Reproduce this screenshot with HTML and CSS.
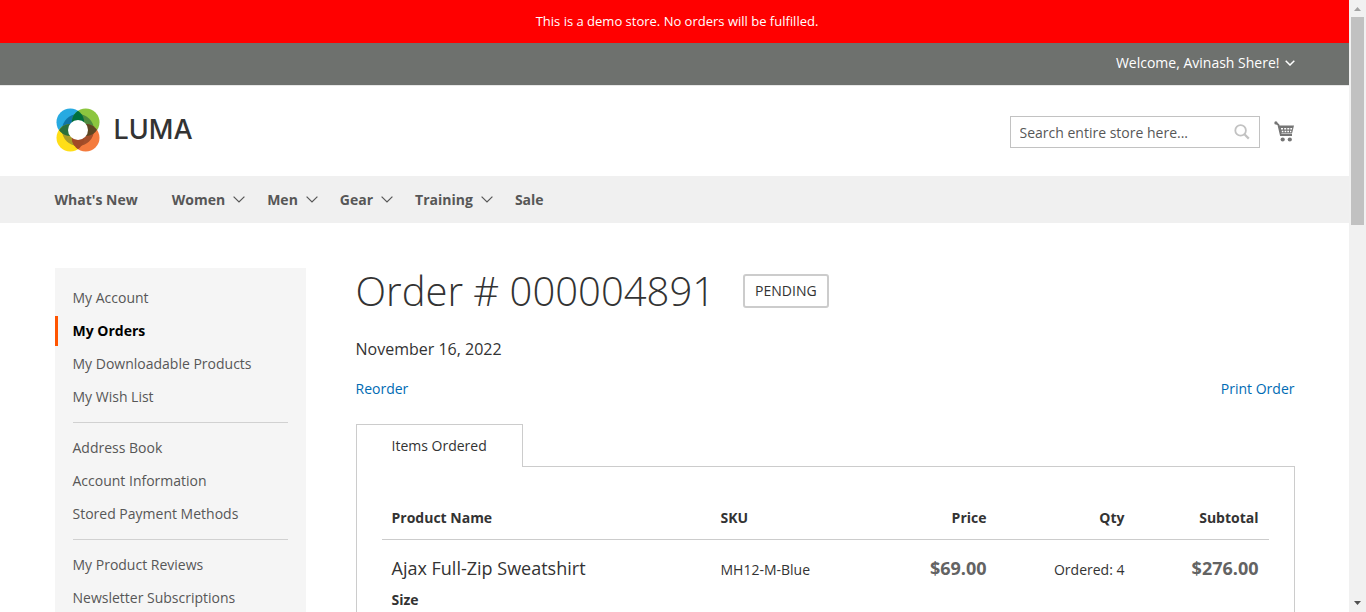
FILE: index.html
```html
<!DOCTYPE html>
<html lang="en">
<head>
<meta charset="utf-8">
<title>Order # 000004891</title>
<link rel="stylesheet" href="styles.css">
</head>
<body>
<div class="window">
  <div class="page">
    <p class="notice">This is a demo store. No orders will be fulfilled.</p>
    <header>
      <div class="topbar">
        <div class="container topbar-inner">
          <button type="button" class="welcome">Welcome, Avinash Shere!
            <svg width="10" height="6" viewBox="0 0 10 6" fill="none" stroke="currentColor" stroke-width="1.5" aria-hidden="true"><path d="M.7 .8 5 5 9.3 .8"/></svg>
          </button>
        </div>
      </div>
      <div class="container header-main">
        <a href="#" class="logo" aria-label="Luma">
          <svg width="45" height="44" viewBox="-1 0 45 44" aria-hidden="true">
            <defs>
              <clipPath id="c1"><circle cx="14.3" cy="14.3" r="13.8"/></clipPath>
              <clipPath id="c2"><circle cx="29.7" cy="14.3" r="13.8"/></clipPath>
              <clipPath id="c3"><circle cx="14.3" cy="29.7" r="13.8"/></clipPath>
              <clipPath id="c4"><circle cx="29.7" cy="29.7" r="13.8"/></clipPath>
            </defs>
            <circle cx="14.3" cy="14.3" r="13.8" fill="#27aae1"/>
            <circle cx="29.7" cy="14.3" r="13.8" fill="#8cc63f"/>
            <circle cx="14.3" cy="29.7" r="13.8" fill="#ffde17"/>
            <circle cx="29.7" cy="29.7" r="13.8" fill="#f47b3e"/>
            <circle cx="22" cy="22" r="16" fill="#0f75a5" clip-path="url(#c1)"/>
            <circle cx="22" cy="22" r="16" fill="#4f8b3e" clip-path="url(#c2)"/>
            <circle cx="22" cy="22" r="16" fill="#a79c2c" clip-path="url(#c3)"/>
            <circle cx="22" cy="22" r="16" fill="#a44f2b" clip-path="url(#c4)"/>
            <g clip-path="url(#c1)"><circle cx="29.7" cy="14.3" r="13.8" fill="#00703c"/><circle cx="14.3" cy="29.7" r="13.8" fill="#2a6f3a"/></g>
            <g clip-path="url(#c4)"><circle cx="29.7" cy="14.3" r="13.8" fill="#5c4621"/><circle cx="14.3" cy="29.7" r="13.8" fill="#a24a26"/></g>
            <circle cx="22" cy="22" r="10" fill="#fff"/>
          </svg>
          <span class="wordmark">LUMA</span>
        </a>
        <div class="header-tools">
          <form class="search">
            <input type="text" aria-label="Search" placeholder="Search entire store here...">
            <button type="button" class="search-button" aria-label="Search">
              <svg width="16" height="16" viewBox="0 0 16 16" fill="none" stroke="#c2c2c2" aria-hidden="true"><circle cx="6.6" cy="6.4" r="5.3" stroke-width="1.8"/><path d="M10.4 10.2 14.8 14.6" stroke-width="2.2"/></svg>
            </button>
          </form>
          <a href="#" class="cart" aria-label="My Cart">
            <svg width="21" height="22" viewBox="0 0 21 22" aria-hidden="true">
              <circle cx="1.9" cy="1.9" r="1.6" fill="#757575"/>
              <path d="M2 2 4.4 3.8 6.8 14H18" fill="none" stroke="#757575" stroke-width="1.8"/>
              <path d="M4.4 4.6H20L18 12.4H6.4Z" fill="#757575"/>
              <path d="M7 7h2v1.6h-2zM10.2 7h2v1.6h-2zM13.3 7h2v1.6h-2zM16.3 7h1.8v1.6h-1.8zM7.8 9.8h1.6v1.5h-1.6zM10.6 9.8h1.7v1.5h-1.7zM13.3 9.8h1.7v1.5h-1.7zM16 9.8h1.3v1.5h-1.3z" fill="#fff"/>
              <circle cx="8.7" cy="18.5" r="2.1" fill="#757575"/><circle cx="15.8" cy="18.5" r="2.1" fill="#757575"/>
            </svg>
          </a>
        </div>
      </div>
    </header>
    <nav class="nav" aria-label="Main">
      <div class="container nav-inner">
        <a href="#" class="plain">What's New</a>
        <a href="#">Women <svg class="chev" viewBox="0 0 12 7" aria-hidden="true"><path d="M.6 .6 6 6 11.4 .6"/></svg></a>
        <a href="#">Men <svg class="chev" viewBox="0 0 12 7" aria-hidden="true"><path d="M.6 .6 6 6 11.4 .6"/></svg></a>
        <a href="#">Gear <svg class="chev" viewBox="0 0 12 7" aria-hidden="true"><path d="M.6 .6 6 6 11.4 .6"/></svg></a>
        <a href="#">Training <svg class="chev" viewBox="0 0 12 7" aria-hidden="true"><path d="M.6 .6 6 6 11.4 .6"/></svg></a>
        <a href="#">Sale</a>
      </div>
    </nav>
    <div class="container columns">
      <aside class="sidebar">
        <ul>
          <li><a href="#">My Account</a></li>
          <li><a href="#" class="current" aria-current="page">My Orders</a></li>
          <li><a href="#">My Downloadable Products</a></li>
          <li><a href="#">My Wish List</a></li>
        </ul>
        <ul>
          <li><a href="#">Address Book</a></li>
          <li><a href="#">Account Information</a></li>
          <li><a href="#">Stored Payment Methods</a></li>
        </ul>
        <ul>
          <li><a href="#">My Product Reviews</a></li>
          <li><a href="#">Newsletter Subscriptions</a></li>
        </ul>
      </aside>
      <main>
        <div class="title">
          <h1>Order # 000004891</h1>
          <span class="status">PENDING</span>
        </div>
        <p class="date">November 16, 2022</p>
        <div class="actions"><a href="#">Reorder</a><a href="#">Print Order</a></div>
        <div class="tabs"><a href="#" class="tab" aria-current="page">Items Ordered</a></div>
        <section class="panel">
          <table>
            <thead>
              <tr><th>Product Name</th><th class="col-sku">SKU</th><th class="col-price num">Price</th><th class="col-qty num">Qty</th><th class="col-total num">Subtotal</th></tr>
            </thead>
            <tbody>
              <tr>
                <td><strong class="product">Ajax Full-Zip Sweatshirt</strong><dl><dt>Size</dt></dl></td>
                <td>MH12-M-Blue</td>
                <td class="num"><span class="price">$69.00</span></td>
                <td class="num">Ordered: 4</td>
                <td class="num"><span class="price">$276.00</span></td>
              </tr>
            </tbody>
          </table>
        </section>
      </main>
    </div>
  </div>
  <div class="scrollbar" aria-hidden="true">
    <svg width="7" height="4" viewBox="0 0 7 4"><path d="M0 4 3.5 0 7 4Z" fill="#a3a3a3"/></svg>
    <div class="track"><div class="thumb"></div></div>
    <svg width="7" height="4" viewBox="0 0 7 4"><path d="M0 0 3.5 4 7 0Z" fill="#505050"/></svg>
  </div>
</div>
</body>
</html>
```
FILE: styles.css
```css
* { box-sizing: border-box; }

body {
  margin: 0;
  background: #fff;
  color: #333;
  font-family: "Open Sans", "Noto Sans", sans-serif;
  font-size: 14px;
  line-height: 20px;
}

a { color: #006bb4; text-decoration: none; }
h1, p, ul, dl { margin: 0; padding: 0; }
ul { list-style: none; }
svg { display: block; }
button { font: inherit; border: 0; background: none; padding: 0; cursor: pointer; }

.window { display: flex; height: 100vh; overflow: hidden; }
.page { flex: 1; min-width: 0; overflow: hidden; }
.container { max-width: 1280px; margin: 0 auto; padding: 0 20px; }

.notice {
  padding: 12px 10px 12px 15px;
  background: #f00;
  color: #fff;
  font-size: 13px;
  line-height: 19px;
  text-align: center;
}

.topbar { background: #6e716e; color: #fff; border-bottom: 1px solid #e8e8e8; }
.topbar-inner { display: flex; justify-content: flex-end; padding-top: 10px; padding-bottom: 12px; }
.welcome { display: flex; align-items: center; gap: 5px; color: #fff; }

.header-main { display: flex; justify-content: space-between; align-items: flex-start; padding-top: 22px; padding-bottom: 24px; }
.logo { display: flex; align-items: center; gap: 14px; color: #333; }
.wordmark { font: 500 27px/42px Inter, sans-serif; }
.header-tools { display: flex; align-items: center; gap: 14px; padding-top: 8px; }
.search { display: flex; position: relative; }
.search input {
  width: 250px;
  height: 32px;
  padding: 0 35px 0 9px;
  border: 1px solid #c2c2c2;
  background: #fff;
  color: #333;
  font: inherit;
}
.search input::placeholder { color: #575757; opacity: 1; }
.search-button { position: absolute; right: 10px; top: 8px; }

.nav { background: #f0f0f0; }
.nav-inner { display: flex; gap: 22px; }
.nav a { display: flex; align-items: center; gap: 8px; color: #575757; font-weight: 700; line-height: 47px; }
.nav .plain { padding-right: 12px; }
.chev { width: 12px; height: 7px; fill: none; stroke: #575757; stroke-width: 1.2; }

.columns { display: flex; gap: 50px; padding-top: 45px; }
.sidebar { flex: 0 0 251px; padding: 15px 0 25px; background: #f5f5f5; }
.sidebar ul { display: grid; gap: 3px; }
.sidebar ul + ul::before { content: ""; height: 1px; margin: 10px 18px 7px; background: #d1d1d1; }
.sidebar a { display: block; padding: 5px 18px 5px 15px; border-left: 3px solid transparent; color: #575757; }
.sidebar .current { border-color: #ff5501; color: #000; font-weight: 700; }

main { flex: 1; min-width: 0; padding-bottom: 40px; }
.title { display: flex; align-items: center; gap: 28px; }
h1 { font-size: 40px; line-height: 46px; font-weight: 300; }
.status { padding: 5px 10px; border: 2px solid #ccc; border-radius: 3px; }
.date { margin-top: 25px; font-size: 16px; }
.actions { display: flex; justify-content: space-between; margin-top: 20px; }

.tabs { display: flex; margin-top: 25px; }
.tab { position: relative; margin-bottom: -1px; padding: 11px 35px; border: 1px solid #ccc; border-bottom: 0; background: #fff; color: #333; }
.panel { padding: 30px 25px; border: 1px solid #ccc; }

table { width: 100%; border-collapse: collapse; table-layout: fixed; }
th { padding: 11px 10px; border-bottom: 1px solid #ccc; font-weight: 700; text-align: left; }
td { padding: 18px 10px; vertical-align: baseline; }
.num { text-align: right; }
.col-sku, .col-price { width: 143px; }
.col-qty { width: 138px; }
.col-total { width: 134px; }
.product { display: block; font-size: 18px; font-weight: 400; }
dl { margin-top: 12px; }
dt { font-weight: 700; }
.price { color: #636363; font-size: 18px; font-weight: 700; }

.scrollbar { flex: 0 0 17px; display: flex; flex-direction: column; align-items: center; padding: 7px 0; background: #f1f1f1; }
.track { flex: 1; align-self: stretch; padding: 6px 2px; }
.thumb { height: 36%; background: #c1c1c1; }
```
